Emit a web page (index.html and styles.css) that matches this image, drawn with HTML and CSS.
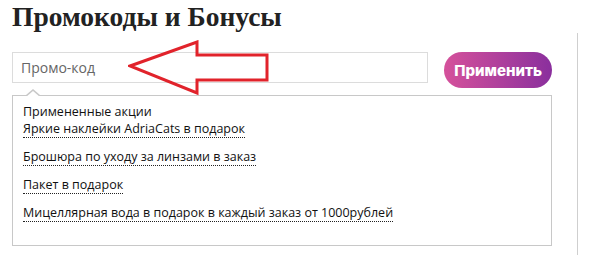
FILE: index.html
```html
<!DOCTYPE html>
<html lang="ru">
<head>
    <meta charset="UTF-8">
    <meta name="viewport" content="width=device-width, initial-scale=1.0">
    <title>Промокоды и Бонусы</title>
    <link rel="stylesheet" href="styles.css">
</head>
<body>
    <div class="page">
        <div class="main">
            <h1 class="title">Промокоды и Бонусы</h1>

            <form class="promo-row">
                <input type="text" class="promo-input" placeholder="Промо-код">
                <button type="button" class="promo-apply">Применить</button>
            </form>

            <div class="promo-actions">
                <div class="actions-title">Примененные акции</div>
                <div class="action-item"><a href="#">Яркие наклейки AdriaCats в подарок</a></div>
                <div class="action-item"><a href="#">Брошюра по уходу за линзами в заказ</a></div>
                <div class="action-item"><a href="#">Пакет в подарок</a></div>
                <div class="action-item"><a href="#">Мицеллярная вода в подарок в каждый заказ от 1000рублей</a></div>
            </div>
        </div>
        <div class="aside"></div>

        <!-- стрелка-подсказка -->
        <svg class="hint-arrow" width="150" height="60" viewBox="128 40 150 60">
            <polygon points="130,66 197,42 197,55 267,55 267,80 197,80 197,93"
                     fill="none" stroke="#e1232b" stroke-width="3" stroke-linejoin="miter"/>
        </svg>
    </div>
</body>
</html>
```

FILE: styles.css
```css
* {
    margin: 0;
    padding: 0;
    box-sizing: border-box;
}

body {
    font-family: "Open Sans", "Liberation Sans", sans-serif;
    background: #fff;
    color: #222;
}

.page {
    position: relative;
    display: flex;
    height: 255px;
    padding-left: 12px;
    overflow: hidden;
}

.main {
    width: 540px;
}

.title {
    font-family: "Liberation Serif", "Times New Roman", serif;
    font-size: 27.5px;
    font-weight: bold;
    line-height: 32px;
    color: #222;
    padding-top: 1px;
    margin-bottom: 19px;
}

/* поле промокода */
.promo-row {
    display: flex;
    align-items: flex-start;
    gap: 16px;
}

.promo-input {
    width: 417px;
    height: 31px;
    border: 1px solid #dcdcdc;
    padding: 0 8px;
    font-family: "Open Sans", "Liberation Sans", sans-serif;
    font-size: 14px;
    color: #333;
    outline: none;
}

.promo-input::placeholder {
    color: #666;
}

.promo-apply {
    width: 108px;
    height: 36px;
    border: none;
    border-radius: 18px;
    background: linear-gradient(90deg, #d5519b, #8a2f9d);
    color: #fff;
    font-family: "Inter", "Liberation Sans", sans-serif;
    font-size: 15px;
    font-weight: 800;
    cursor: pointer;
}

/* примененные акции */
.promo-actions {
    position: relative;
    margin-top: 7px;
    height: 151px;
    border: 1px solid #c8c8c8;
    padding: 8px 10px 0;
    font-size: 12.5px;
    line-height: 16px;
}

.promo-actions::before,
.promo-actions::after {
    content: '';
    position: absolute;
    left: 13px;
    width: 0;
    height: 0;
    border-left: 7px solid transparent;
    border-right: 7px solid transparent;
}

.promo-actions::before {
    top: -7px;
    border-bottom: 6px solid #c8c8c8;
}

.promo-actions::after {
    top: -5px;
    border-bottom: 6px solid #fff;
}

.actions-title {
    color: #111;
}

.action-item {
    margin-top: 12px;
}

.actions-title + .action-item {
    margin-top: 1px;
}

.action-item a {
    color: #111;
    text-decoration: none;
    border-bottom: 1px dotted #222;
}

.aside {
    margin-left: 25px;
    margin-top: 33px;
    border-left: 1px solid #cfcfcf;
    flex: 1;
}

.hint-arrow {
    position: absolute;
    left: 128px;
    top: 40px;
}
```
